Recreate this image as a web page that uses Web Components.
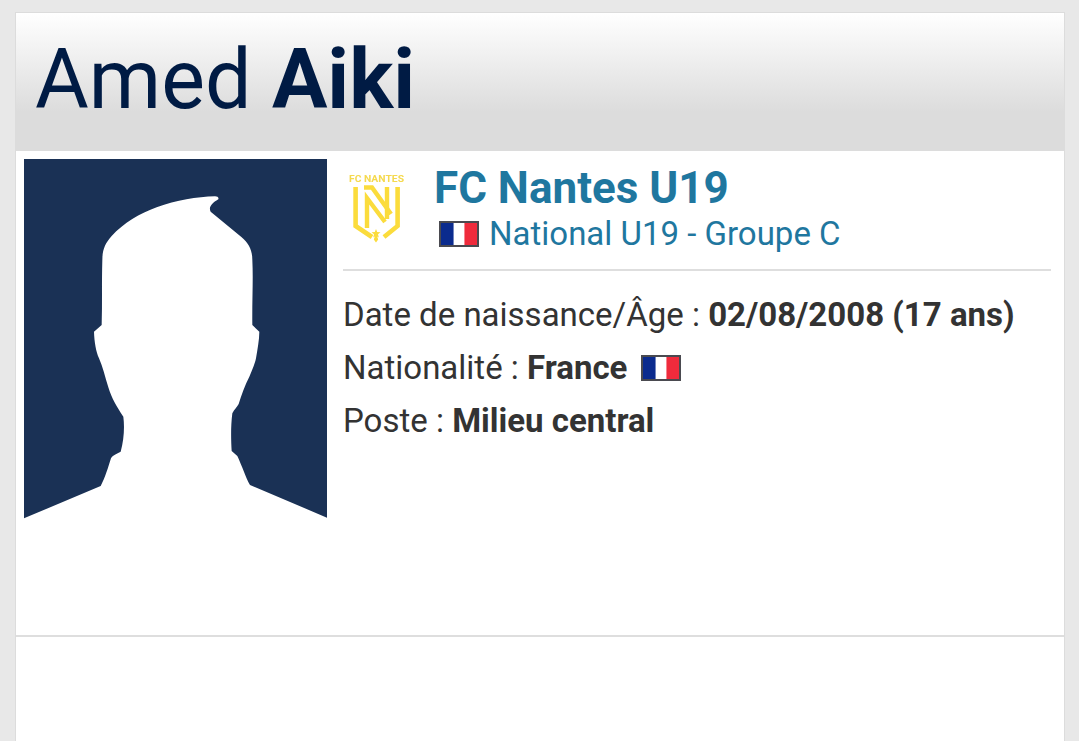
<!DOCTYPE html>
<html lang="fr">
<head>
<meta charset="utf-8">
<title>Amed Aiki</title>
<style>
html,body{margin:0;padding:0;height:741px;overflow:hidden;background:#e8e8e8;font-family:Roboto,"Liberation Sans",sans-serif;}
</style>
</head>
<body>
<template id="t-card">
<style>
:host{display:block;margin:12px 14px 0 15px;height:760px;background:#fff;border:1px solid #dcdcdc;border-bottom:0;box-sizing:border-box;color:#333;}
.body{display:flex;gap:16px;height:486px;box-sizing:border-box;padding:8px 13px 0 8px;border-bottom:2px solid #dedede;}
.main{flex:1;min-width:0;display:flex;flex-direction:column;}
</style>
<slot name="header"></slot>
<div class="body">
  <slot name="photo"></slot>
  <div class="main">
    <slot name="club"></slot>
    <slot></slot>
  </div>
</div>
</template>

<template id="t-header">
<style>
:host{display:block;height:138px;box-sizing:border-box;padding:21px 0 0 19px;background:linear-gradient(#fff 0,#dcdcdc 72%,#dcdcdc 100%);color:#001b44;font-size:82.5px;line-height:92px;font-weight:400;white-space:nowrap;}
</style>
<slot></slot>
</template>

<template id="t-photo">
<style>
:host{display:block;flex:none;width:303px;height:370px;}
svg{display:block;width:303px;height:370px;filter:blur(.3px);}
</style>
<svg viewBox="72 27 909 1110" preserveAspectRatio="none" aria-hidden="true">
<path fill="#1a3155" d="M72 27H981V1103L750 1005C738 985 725 945 712 918L695 903C693 870 692 830 697 790C703 778 712 770 716 762C724 735 735 705 748 680C757 660 765 640 768 625C772 600 778 570 778 545L757 525C756 450 760 390 757 330C757 298 745 280 725 262L632 185C625 172 635 160 655 148C657 142 652 139 645 139C590 141 530 150 470 172C420 190 370 220 335 258C315 280 307 300 307 330C305 400 307 460 305 525L282 545C283 575 288 605 297 625C308 650 315 680 325 712C335 745 350 770 370 800C374 830 372 870 362 905C350 912 338 915 333 925C325 950 315 985 302 1008L72 1105Z"/>
</svg>
</template>

<template id="t-club">
<style>
:host{display:flex;height:112px;box-sizing:border-box;border-bottom:2px solid #dedede;}
.text{margin-left:3px;display:flex;flex-direction:column;color:#1f779f;}
.name{font-size:44px;line-height:50px;font-weight:700;white-space:nowrap;margin-top:4px;}
.league{display:flex;align-items:center;gap:10px;margin:1px 0 0 5px;font-size:33px;line-height:40px;white-space:nowrap;}
</style>
<slot name="logo"></slot>
<div class="text">
  <div class="name"><slot name="name"></slot></div>
  <div class="league"><fr-flag></fr-flag><span><slot name="league"></slot></span></div>
</div>
</template>

<template id="t-logo">
<style>
:host{display:block;flex:none;width:88px;height:96px;}
svg{display:block;width:66px;height:84px;margin-top:6px;filter:blur(.35px);}
text{font:700 9.6px Roboto,"Liberation Sans",sans-serif;fill:#f5d94e;}
</style>
<svg viewBox="343 165 66 84" aria-label="FC Nantes">
<text x="349" y="182" textLength="55" lengthAdjust="spacingAndGlyphs">FC NANTES</text>
<g fill="none" stroke="#fbdc3c" stroke-linejoin="miter">
<path stroke-width="4.6" d="M355.6 187V226L372 237"/>
<path stroke-width="4.6" d="M397.6 187V226L384 237"/>
<path stroke-width="4.4" d="M367 228V198L385 222"/>
<path stroke-width="4.4" d="M387 187V219"/>
<path stroke-width="4.4" d="M364 187.5H372L391 214"/>
</g>
<path fill="#fbdc3c" d="M376 229l1.2 3 3.3.3-2.5 2 .8 3.1-1.6-1 1 3.1-2.2 3-2.2-3 1-3.1-1.6 1 .8-3.1-2.5-2 3.3-.3z"/>
</svg>
</template>

<template id="t-flag">
<style>
:host{display:inline-block;flex:none;width:40px;height:26px;box-sizing:border-box;border:2px solid #4a4a50;background:linear-gradient(90deg,#0b2b8e 0 33%,#fff 37% 63%,#ef2b3c 67% 100%);vertical-align:middle;}
</style>
</template>

<template id="t-row">
<style>
:host{display:flex;align-items:center;height:53px;font-size:33px;color:#333;white-space:nowrap;}
</style>
<slot></slot>
</template>

<script>
function define(tag, tpl){
  customElements.define(tag, class extends HTMLElement{
    constructor(){
      super();
      this.attachShadow({mode:"open"}).appendChild(document.getElementById(tpl).content.cloneNode(true));
    }
  });
}
define("player-card","t-card");
define("card-header","t-header");
define("player-photo","t-photo");
define("club-info","t-club");
define("club-logo","t-logo");
define("fr-flag","t-flag");
define("info-row","t-row");
</script>

<player-card>
  <card-header slot="header">Amed <b>Aiki</b></card-header>
  <player-photo slot="photo"></player-photo>
  <club-info slot="club">
    <club-logo slot="logo"></club-logo>
    <span slot="name">FC Nantes U19</span>
    <span slot="league">National U19 - Groupe C</span>
  </club-info>
  <div style="padding-top:17px">
    <info-row><span style="white-space:pre">Date de naissance/Âge : <b>02/08/2008 (17 ans)</b></span></info-row>
    <info-row><span style="white-space:pre">Nationalité : <b>France</b></span><fr-flag style="margin-left:14px"></fr-flag></info-row>
    <info-row><span style="white-space:pre">Poste : <b>Milieu central</b></span></info-row>
  </div>
</player-card>
</body>
</html>
